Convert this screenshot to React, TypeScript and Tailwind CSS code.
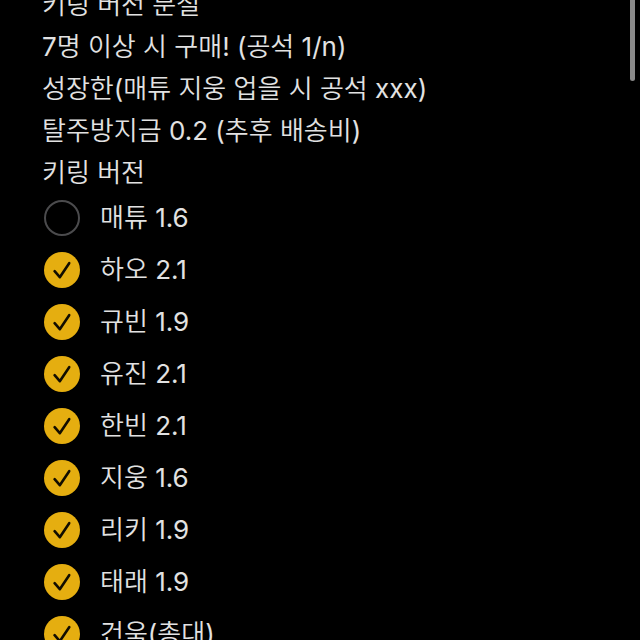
import React from "react";

interface Member {
  id: string;
  label: string;
  checked: boolean;
}

const NOTE_LINES = [
  "키링 버전 분철",
  "7명 이상 시 구매! (공석 1/n)",
  "성장한(매튜 지웅 업을 시 공석 xxx)",
  "탈주방지금 0.2 (추후 배송비)",
  "키링 버전",
];

const MEMBERS: Member[] = [
  { id: "matthew", label: "매튜 1.6", checked: false },
  { id: "hao", label: "하오 2.1", checked: true },
  { id: "gyuvin", label: "규빈 1.9", checked: true },
  { id: "yujin", label: "유진 2.1", checked: true },
  { id: "hanbin", label: "한빈 2.1", checked: true },
  { id: "jiwoong", label: "지웅 1.6", checked: true },
  { id: "ricky", label: "리키 1.9", checked: true },
  { id: "taerae", label: "태래 1.9", checked: true },
  { id: "gunwook", label: "건욱(총대)", checked: true },
];

const ChecklistRow: React.FC<{ member: Member }> = ({ member }) => {
  return (
    <li className="flex h-[52px] items-center gap-5">
      <span className="grid shrink-0 place-items-center">
        <input
          id={member.id}
          type="checkbox"
          defaultChecked={member.checked}
          className="peer col-start-1 row-start-1 size-9 appearance-none rounded-full border-2 border-[#4b4b4d] checked:border-0 checked:bg-[#e5ae10]"
        />
        <svg
          viewBox="0 0 36 36"
          className="pointer-events-none invisible col-start-1 row-start-1 size-9 peer-checked:visible"
          fill="none"
          stroke="#120d00"
          strokeWidth="2.6"
          strokeLinecap="round"
          strokeLinejoin="round"
        >
          <path d="M10.6 19.2 L15.8 25.2 L25.2 11.2" />
        </svg>
      </span>
      <label htmlFor={member.id}>{member.label}</label>
    </li>
  );
};

export default function App() {
  return (
    <main className="relative h-screen overflow-hidden bg-black font-[Inter,'Noto_Sans_CJK_KR_DemiLight','Noto_Sans_CJK_KR',sans-serif] text-[26px] leading-[42px] font-normal text-[#e2e2e2]">
      {/* note is scrolled a little, so the first line is cut at the top */}
      <div className="-mt-4 pr-8 pl-[42px]">
        {NOTE_LINES.map((line, i) => (
          <p key={i}>{line}</p>
        ))}
        <ul className="-mt-0.5 pl-0.5">
          {MEMBERS.map((member) => (
            <ChecklistRow key={member.id} member={member} />
          ))}
        </ul>
      </div>

      {/* scroll indicator */}
      <div className="absolute top-0 right-[5px] h-[81px] w-[5px] rounded-b-full bg-[#8a8a8a]" />
    </main>
  );
}
